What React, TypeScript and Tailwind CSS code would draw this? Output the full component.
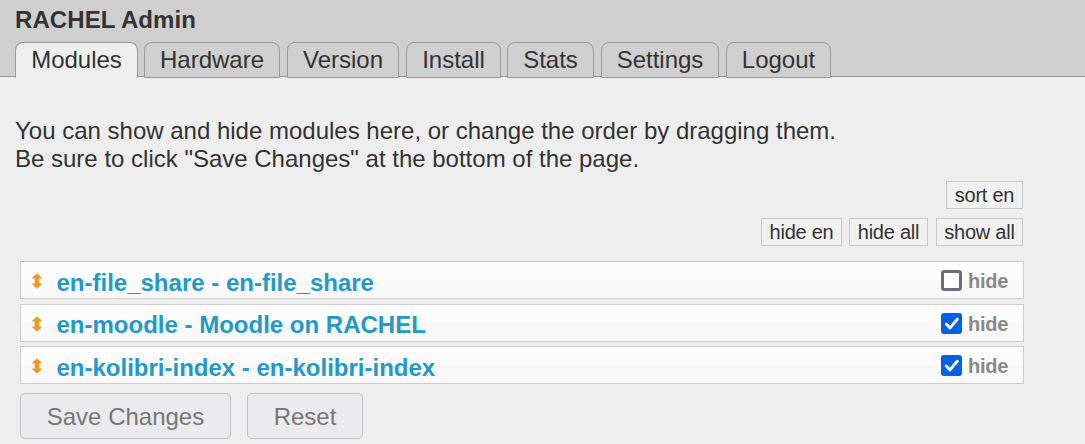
import React, { useState } from "react";

const tabs = [
  { label: "Modules", width: "w-[123px]" },
  { label: "Hardware", width: "w-[136px]" },
  { label: "Version", width: "w-[112px]" },
  { label: "Install", width: "w-[95px]" },
  { label: "Stats", width: "w-[87px]" },
  { label: "Settings", width: "w-[118px]" },
  { label: "Logout", width: "w-[105px]" },
];

const modules = [
  { name: "en-file_share - en-file_share", hidden: false, gap: "mb-[5px]", text: "pt-[6px]" },
  { name: "en-moodle - Moodle on RACHEL", hidden: true, gap: "mb-[4px]", text: "pt-[4px]" },
  { name: "en-kolibri-index - en-kolibri-index", hidden: true, gap: "", text: "pt-[6px]" },
];

function SortIcon() {
  return (
    <svg width="12" height="16" viewBox="0 0 12 16" className="mt-px ml-[10px] shrink-0" fill="#ef9a1d">
      <path d="M6 1.2 10.2 5H7.7V11H10.2L6 14.8 1.8 11H4.3V5H1.8Z" stroke="#ef9a1d" strokeWidth="1.2" strokeLinejoin="round" />
    </svg>
  );
}

function Checkbox({ checked }: { checked: boolean }) {
  return (
    <svg width="21" height="21" viewBox="0 0 21 21" className="shrink-0">
      {checked ? (
        <>
          <rect width="21" height="21" rx="3" fill="#0362e3" />
          <path d="m5.3 11 3.7 3.9 7.3-8.7" fill="none" stroke="#fff" strokeWidth="2.9" strokeLinecap="round" strokeLinejoin="round" />
        </>
      ) : (
        <rect x="1.5" y="1.5" width="18" height="18" rx="1.8" fill="#fff" stroke="#6d6c78" strokeWidth="3" />
      )}
    </svg>
  );
}

function SmallButton({ children, className }: { children: React.ReactNode; className: string }) {
  return (
    <button className={`h-7 border border-[#c8c8c8] bg-[#f1f1f1] text-[20px] leading-[26px] tracking-[-0.25px] whitespace-nowrap ${className}`}>
      {children}
    </button>
  );
}

export default function App() {
  const [rows, setRows] = useState(modules);
  const toggle = (i: number) => setRows(rows.map((r, j) => (j === i ? { ...r, hidden: !r.hidden } : r)));

  return (
    <div className="h-[444px] overflow-hidden bg-[#eeeeee] font-['Liberation_Sans',Arial,sans-serif] text-2xl text-[#333333]">
      <header className="h-[77px] border-b border-[#999999] bg-[#cfcfcf] pl-[15px]">
        <h1 className="h-[42px] pt-[6px] leading-[28px] font-bold tracking-[0.08px]">RACHEL Admin</h1>
        <nav className="flex h-9">
          {tabs.map((t, i) => (
            <a
              key={t.label}
              className={`h-9 rounded-t-[8px] border border-[#999999] text-center leading-[34px] ${t.width} ${
                i === 0 ? "border-b-[#eeeeee] bg-[#eeeeee]" : "bg-[#cfcfcf]"
              } ${i === 1 || i === 4 ? "ml-[6px]" : i === 0 ? "" : "ml-[7px]"}`}
            >
              {t.label}
            </a>
          ))}
        </nav>
      </header>

      <main>
        <p className="pt-10 pl-[15px] leading-7">
          You can show and hide modules here, or change the order by dragging them.
          <br />
          Be sure to click "Save Changes" at the bottom of the page.
        </p>

        <div className="mr-[62px] mt-2 flex justify-end">
          <SmallButton className="w-[77px]">sort en</SmallButton>
        </div>
        <div className="mr-[62px] mt-[9px] flex justify-end">
          <SmallButton className="w-[81px]">hide en</SmallButton>
          <SmallButton className="ml-[7px] w-[79px]">hide all</SmallButton>
          <SmallButton className="ml-[8px] w-[87px]">show all</SmallButton>
        </div>

        <ul className="mt-[15px] ml-5 w-[1004px]">
          {rows.map((m, i) => (
            <li
              key={m.name}
              className={`flex h-[38px] items-center border border-[#cccccc] bg-linear-to-b from-[#fcfcfc] from-50% to-[#f9f9f9] to-50% font-bold ${m.gap}`}
            >
              <SortIcon />
              <span className={`ml-[13.5px] flex-1 leading-7 text-[#2299c8] ${m.text}`}>{m.name}</span>
              <label className="mr-[15px] flex items-center text-[20px] tracking-[-0.3px] text-[#888888]" onClick={() => toggle(i)}>
                <Checkbox checked={m.hidden} />
                <span className="ml-[6px] pt-px leading-6">hide</span>
              </label>
            </li>
          ))}
        </ul>

        <div className="mt-[9px] ml-5 flex gap-4">
          <button className="h-[46px] w-[211px] rounded-[5px] border border-[#c2c2c4] bg-[#ebebed] pt-[2px] text-[#777777]">Save Changes</button>
          <button className="h-[46px] w-[116px] rounded-[5px] border border-[#c2c2c4] bg-[#ebebed] pt-[2px] text-[#777777]">Reset</button>
        </div>
      </main>
    </div>
  );
}
